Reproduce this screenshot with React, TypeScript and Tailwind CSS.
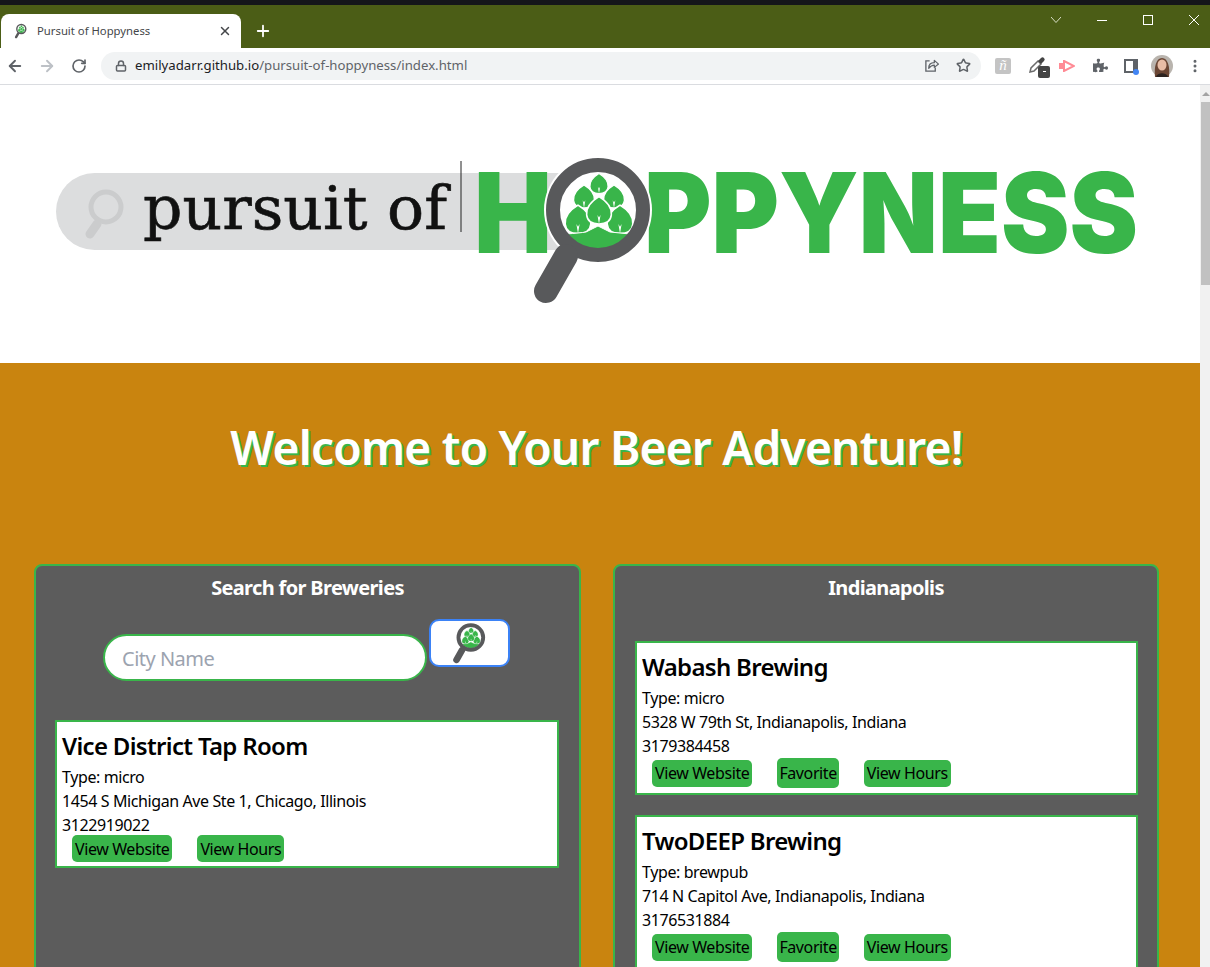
import { ArrowLeft, ArrowRight, RotateCw, Lock, Star, Plus, X, MoreVertical } from "lucide-react";
import { FaPuzzlePiece } from "react-icons/fa";

const GREEN = "#39b54a";
const GRAY = "#58595b";

const bodyFont = { fontFamily: '"Noto Sans", sans-serif' };

function Leaf({ x, y, s = 1 }: { x: number; y: number; s?: number }) {
  return (
    <g transform={`translate(${x} ${y}) scale(${s})`}>
      <path
        d="M0 -11 C5 -8 10 -3 9.5 3 C9 8 5 10 0 10 C-5 10 -9 8 -9.5 3 C-10 -3 -5 -8 0 -11Z"
        fill={GREEN}
        stroke="#fff"
        strokeWidth="1.2"
      />
      <path d="M0 10 L-1.2 3 L0 5 L1.2 3Z" fill="#fff" />
    </g>
  );
}

// coordinates are page pixels of the big logo, so the small copies just crop it
function HopGlass({ className }: { className?: string }) {
  return (
    <svg viewBox="530 150 130 160" className={className}>
      <HopGlassShapes />
    </svg>
  );
}

function HopGlassShapes() {
  return (
    <g>
      <circle cx="598" cy="210" r="54" fill="#fff" />
      <Leaf x={599} y={184} s={0.95} />
      <Leaf x={584} y={197} s={1.1} />
      <Leaf x={614} y={197} s={1.1} />
      <Leaf x={578} y={220} s={1.35} />
      <Leaf x={620} y={220} s={1.35} />
      <Leaf x={599} y={211} s={1.3} />
      <path d="M566 234 Q580 233 586 232 L598 226 L610 232 Q620 233 630 234 A40 40 0 0 1 566 234Z" fill={GREEN} stroke="#fff" strokeWidth="1" />
      <circle cx="598" cy="210" r="45" fill="none" stroke={GRAY} strokeWidth="14" />
      <path d="M566 256 L546 291" stroke={GRAY} strokeWidth="24" strokeLinecap="round" />
    </g>
  );
}

function Logo() {
  return (
    <svg viewBox="0 85 1200 278" className="block h-[278px] w-full">
      <path d="M94.5 173 H560 V250 H94.5 A38.5 38.5 0 0 1 94.5 173Z" fill="#dcddde" />
      <circle cx="106" cy="207" r="15" fill="none" stroke="#cbcccd" strokeWidth="5" />
      <path d="M97 224 L90 234" stroke="#cbcccd" strokeWidth="9" strokeLinecap="round" />
      <text
        x="143"
        y="229"
        fontFamily='"DejaVu Serif", serif'
        fontSize="60"
        textLength="304"
        lengthAdjust="spacingAndGlyphs"
        fill="#111"
        stroke="#111"
        strokeWidth="0.6"
      >
        pursuit of
      </text>
      <path d="M461 161 V232" stroke="#222" strokeWidth="1" />
      <text
        x="474"
        y="253"
        fontFamily="Inter, sans-serif"
        fontWeight="900"
        fontSize="111"
        textLength="78"
        lengthAdjust="spacingAndGlyphs"
        fill={GREEN}
      >
        H
      </text>
      <text
        x="644"
        y="253"
        fontFamily="Inter, sans-serif"
        fontWeight="900"
        fontSize="111"
        textLength="494"
        lengthAdjust="spacingAndGlyphs"
        fill={GREEN}
      >
        PPYNESS
      </text>
      <HopGlassShapes />
    </svg>
  );
}

function TabBar() {
  return (
    <div className="relative h-[48px] bg-[#4b5d16]">
      <div className="h-[5px] bg-[#14161a]" />
      <div className="flex pl-[1px] pt-[9px]">
        <div className="flex h-[34px] w-[240px] items-center rounded-t-[8px] bg-white pl-[13px] pr-[9px]">
          <HopGlass className="h-[16px] w-[14px]" />
          <span className="ml-[9px] flex-1 text-[11.3px] text-[#45474a]" style={bodyFont}>
            Pursuit of Hoppyness
          </span>
          <X size={14} strokeWidth={2.5} className="text-[#45474a]" />
        </div>
        <Plus size={18} strokeWidth={2.4} className="ml-[13px] mt-[8px] text-white" />
      </div>
      <div className="absolute right-[11px] top-[15px] flex items-center gap-[36px]">
        <svg width="10" height="10" viewBox="0 0 10 10">
          <path d="M0 2 L5 7.5 L10 2" fill="none" stroke="#d5dcc4" strokeWidth="1" />
        </svg>
        <div className="h-[1px] w-[10px] bg-white" />
        <div className="h-[10px] w-[10px] border border-white" />
        <svg width="10" height="10" viewBox="0 0 10 10">
          <path d="M0 0 L10 10 M10 0 L0 10" stroke="#fff" strokeWidth="1" />
        </svg>
      </div>
    </div>
  );
}

function Toolbar() {
  return (
    <div className="flex h-[37px] items-center border-b border-[#dadce0] bg-white pb-[1px]">
      <ArrowLeft size={18} strokeWidth={2.5} className="ml-[6px] text-[#5f6368]" />
      <ArrowRight size={18} strokeWidth={2.5} className="ml-[14px] text-[#bdc1c6]" />
      <RotateCw size={16} strokeWidth={2.5} className="ml-[15px] text-[#5f6368]" />
      <div className="ml-[14px] flex h-[28px] w-[880px] items-center rounded-full bg-[#f1f3f4] pl-[14px]">
        <Lock size={12} strokeWidth={3} className="text-[#5f6368]" />
        <span className="ml-[8px] flex-1 text-[13.2px]" style={bodyFont}>
          <span className="text-[#202124]">emilyadarr.github.io</span>
          <span className="text-[#5f6368]">/pursuit-of-hoppyness/index.html</span>
        </span>
        <svg viewBox="0 0 16 16" className="h-[15px] w-[15px]">
          <path d="M6 3 H2 V14 H12 V10" fill="none" stroke="#5f6368" strokeWidth="1.4" />
          <path d="M5 11 C5 7 7 5 11 5 V2.5 L15.5 6.5 L11 10 V7.5 C8 7.5 6.5 9 5 11Z" fill="none" stroke="#5f6368" strokeWidth="1.3" strokeLinejoin="round" />
        </svg>
        <Star size={15} strokeWidth={2.4} className="ml-[17px] mr-[10px] text-[#5f6368]" />
      </div>
      <div
        className="ml-[14px] flex h-[16px] w-[16px] items-center justify-center rounded-[2px] bg-[#c4c4c4] text-[15px] italic leading-none text-white"
        style={{ fontFamily: '"Liberation Serif", serif' }}
      >
        ñ
      </div>
      <div className="relative ml-[17px] h-[24px] w-[22px]">
        <svg viewBox="0 0 18 18" className="absolute left-0 top-[2px] h-[18px] w-[18px]">
          <path d="M2 16 L3 12 L10 5 L13 8 L6 15Z" fill="#fff" stroke="#6b6b6b" strokeWidth="1.5" />
          <path d="M10 5 L13 2 A2 2 0 0 1 16 5 L13 8Z" fill="#444" />
        </svg>
        <div className="absolute bottom-0 right-0 flex h-[12px] w-[12px] items-center justify-center rounded-[2px] bg-[#444]">
          <div className="h-[1px] w-[3px] bg-white" />
        </div>
      </div>
      <svg viewBox="0 0 16 12" className="ml-[9px] h-[12px] w-[16px]">
        <path d="M0 3 H5 V9 H0Z" fill="#ff8a94" />
        <path d="M5 1 L15 6 L5 11Z" fill="none" stroke="#ff8a94" strokeWidth="2" />
      </svg>
      <FaPuzzlePiece size={15} className="ml-[18px] text-[#5f6368]" />
      <div className="relative ml-[16px] h-[14px] w-[14px] border-[2px] border-[#5f6368] border-r-[5px]">
        <div className="absolute -bottom-[4px] -right-[6px] h-[6px] w-[6px] rounded-full bg-[#4285f4]" />
      </div>
      <svg viewBox="0 0 22 22" className="ml-[13px] h-[22px] w-[22px]">
        <circle cx="11" cy="11" r="11" fill="#b9b4ae" />
        <path d="M4 22 C3 12 5 3 11 3 C17 3 19 12 18 22Z" fill="#6b4634" />
        <ellipse cx="11" cy="10" rx="4.5" ry="5.5" fill="#e8bda6" />
        <path d="M5 22 C6 17 16 17 17 22Z" fill="#2c2320" />
      </svg>
      <MoreVertical size={16} strokeWidth={2.5} className="ml-[14px] text-[#5f6368]" />
    </div>
  );
}

function Scrollbar() {
  return (
    <div className="flex w-[10px] flex-col bg-[#f1f1f1] pl-[1px]">
      <div className="flex h-[17px] items-center justify-center">
        <div className="h-0 w-0 border-x-[4px] border-b-[4px] border-x-transparent border-b-[#a3a3a3]" />
      </div>
      <div className="h-[183px] bg-[#c1c1c1]" />
    </div>
  );
}

interface Brewery {
  name: string;
  type: string;
  address: string;
  phone: string;
  favorite: boolean;
}

const found: Brewery = {
  name: "Vice District Tap Room",
  type: "micro",
  address: "1454 S Michigan Ave Ste 1, Chicago, Illinois",
  phone: "3122919022",
  favorite: false,
};

const saved: Brewery[] = [
  { name: "Wabash Brewing", type: "micro", address: "5328 W 79th St, Indianapolis, Indiana", phone: "3179384458", favorite: true },
  { name: "TwoDEEP Brewing", type: "brewpub", address: "714 N Capitol Ave, Indianapolis, Indiana", phone: "3176531884", favorite: true },
];

function ActionButton({ label, tall }: { label: string; tall?: boolean }) {
  return (
    <button
      className={`rounded-[5px] bg-[#39b54a] text-[16px] tracking-[-0.4px] text-black ${
        tall ? "h-[30px] px-[2px]" : "h-[27px] px-[3px]"
      }`}
    >
      {label}
    </button>
  );
}

function BreweryCard({ brewery }: { brewery: Brewery }) {
  return (
    <div
      className={`border-2 border-[#39b54a] bg-white pl-[5px] text-[16px] leading-[24px] tracking-[-0.4px] text-black ${
        brewery.favorite ? "pb-[5px]" : "pb-[4px]"
      }`}
    >
      <h3 className="mt-[5px] text-[24px] font-semibold leading-[38px] tracking-[-0.68px]">{brewery.name}</h3>
      <p>Type: {brewery.type}</p>
      <p>{brewery.address}</p>
      <p>{brewery.phone}</p>
      <div className={`flex items-center gap-[25px] pl-[10px] ${brewery.favorite ? "mt-0" : "-mt-[2px]"}`}>
        <ActionButton label="View Website" />
        {brewery.favorite && <ActionButton label="Favorite" tall />}
        <ActionButton label="View Hours" />
      </div>
    </div>
  );
}

function PanelTitle({ children }: { children: string }) {
  return (
    <h2 className="pt-[7px] text-center text-[20px] font-bold leading-[30px] tracking-[-0.65px] text-white">
      {children}
    </h2>
  );
}

function SearchPanel() {
  return (
    <section className="h-[500px] w-[547px] rounded-[8px] border-2 border-[#39b54a] bg-[#5c5c5c]">
      <PanelTitle>Search for Breweries</PanelTitle>
      <div className="mt-[16px] flex items-start pl-[67px]">
        <div className="mt-[15px] flex h-[47px] w-[324px] items-center rounded-[24px] border-2 border-[#39b54a] bg-white pl-[17px] pt-[3px] text-[20px] tracking-[-0.5px] text-[#9ca3af]">
          City Name
        </div>
        <div className="ml-[2px] flex h-[48px] w-[81px] items-center justify-center rounded-[10px] border-2 border-[#3b82f6] bg-white">
          <HopGlass className="h-[44px] w-[36px]" />
        </div>
      </div>
      <div className="ml-[19px] mt-[39px] w-[504px]">
        <BreweryCard brewery={found} />
      </div>
    </section>
  );
}

function SavedPanel() {
  return (
    <section className="h-[500px] w-[546px] rounded-[8px] border-2 border-[#39b54a] bg-[#5c5c5c]">
      <PanelTitle>Indianapolis</PanelTitle>
      <div className="ml-[20px] mt-[38px] flex w-[503px] flex-col gap-[20px]">
        {saved.map((brewery) => (
          <BreweryCard key={brewery.name} brewery={brewery} />
        ))}
      </div>
    </section>
  );
}

export default function App() {
  return (
    <div className="flex h-[967px] w-[1210px] flex-col overflow-hidden bg-white" style={bodyFont}>
      <TabBar />
      <Toolbar />
      <div className="flex min-h-0 flex-1">
        <main className="w-[1200px]">
          <Logo />
          <div className="h-[700px] bg-[#c9840f]">
            <h1 className="pr-[7px] pt-[54px] text-center text-[46px] font-semibold leading-[60px] tracking-[-0.74px] text-white [text-shadow:2px_2px_0_#39b54a]">
              Welcome to Your Beer Adventure!
            </h1>
            <div className="mt-[87px] flex gap-[32px] pl-[34px]">
              <SearchPanel />
              <SavedPanel />
            </div>
          </div>
        </main>
        <Scrollbar />
      </div>
    </div>
  );
}
